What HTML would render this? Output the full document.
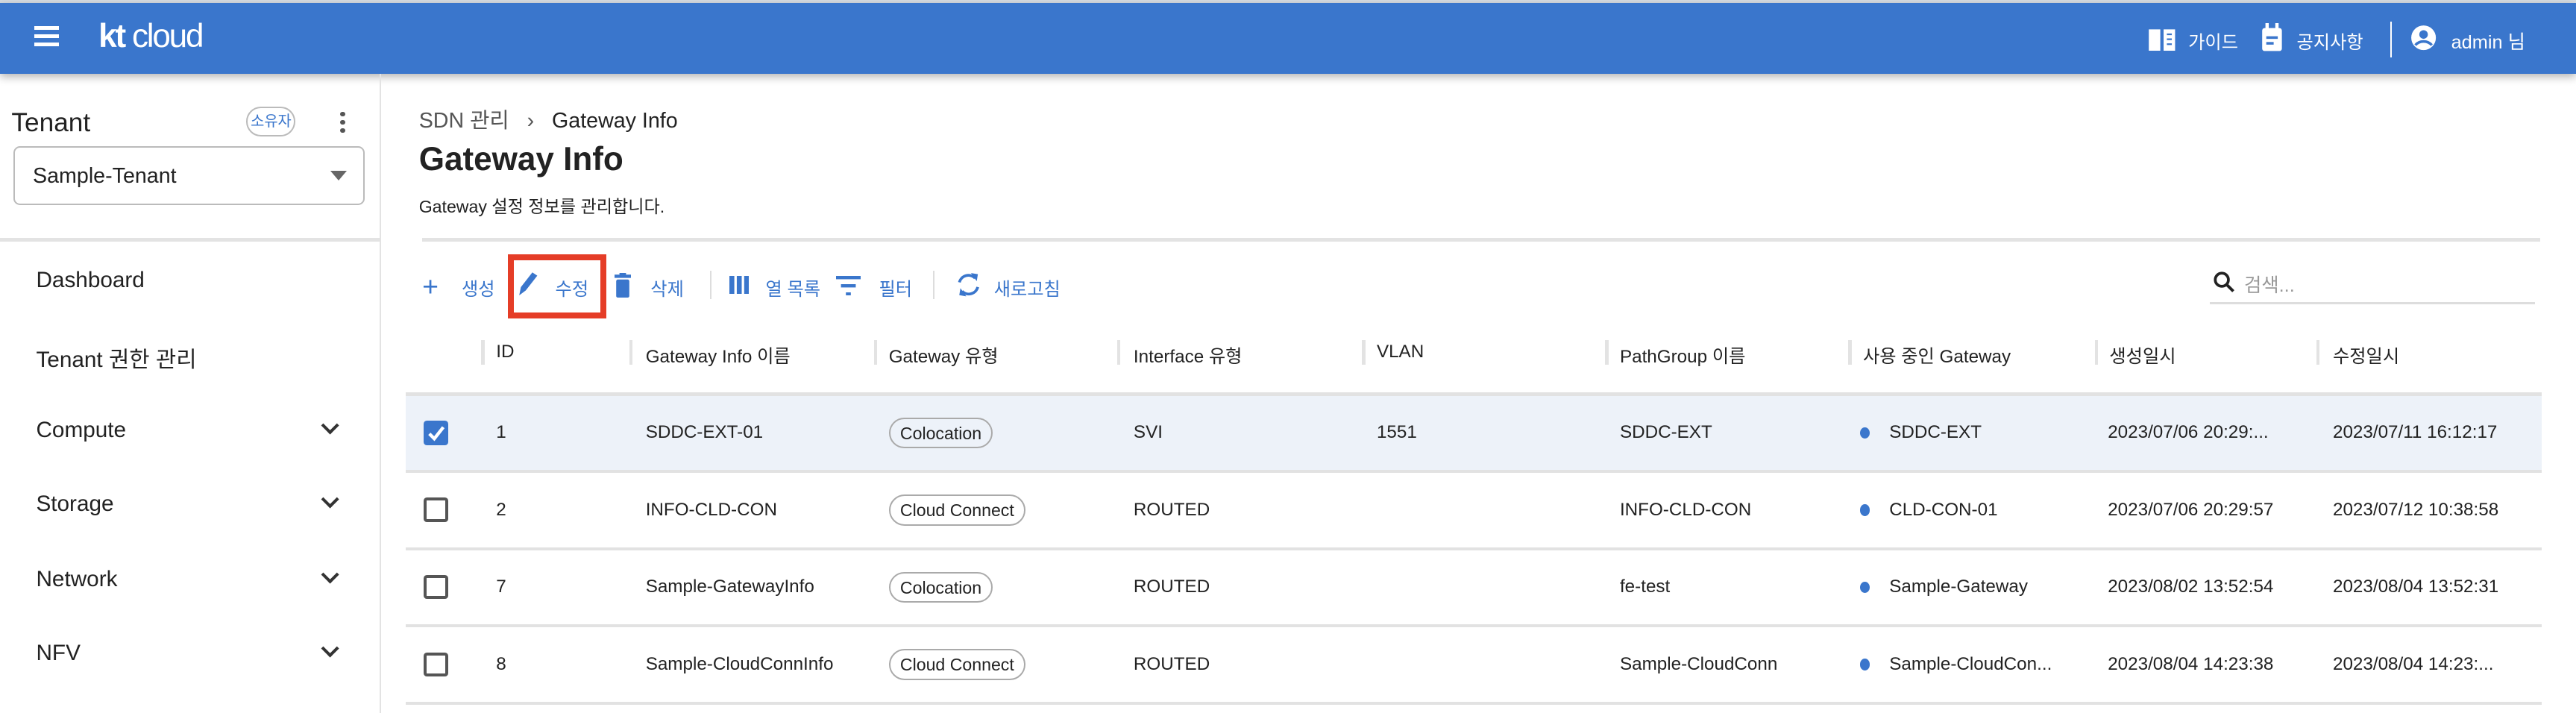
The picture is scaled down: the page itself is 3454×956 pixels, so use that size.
<!DOCTYPE html>
<html><head><meta charset="utf-8"><style>
html,body{margin:0;padding:0;background:#fff;overflow:hidden}
body{width:3454px;height:956px}
#w{zoom:2.2028;width:1568px;height:434px;position:relative;font-family:"Liberation Sans","Noto Sans CJK KR",sans-serif;color:#222}
.a{position:absolute;white-space:nowrap}
.hdr{position:absolute;left:0;top:2px;width:1568px;height:43px;background:#3a76cc;box-shadow:0 2px 5px rgba(0,0,0,.3)}
.top{position:absolute;left:0;top:0;width:1568px;height:2px;background:#d5dbe1}
.w{color:#fff}
.menu{font-size:13.5px;color:#222}
.chev{position:absolute;left:197px;width:6px;height:6px;border-right:2px solid #333;border-bottom:2px solid #333;transform:rotate(45deg)}
.tb{font-size:11px;color:#3a76cc}
.th{font-size:11px;color:#222;top:208px}
.sep{position:absolute;top:207px;width:2px;height:15px;background:#e3e3e3}
.hl{position:absolute;left:247px;width:1300px;height:2px;background:#e2e2e2}
.td{font-size:11px;color:#222}
.chip{position:absolute;left:541px;height:19px;border:1px solid #aaa;border-radius:10px;font-size:10.5px;line-height:18px;padding:0 6px;box-sizing:border-box}
.cb{position:absolute;left:258px;width:11px;height:11px;border:2px solid #555;border-radius:2px}
.dot{position:absolute;left:1132px;width:6px;height:7px;border-radius:50%;background:#3a76cc}
</style></head><body><div id="w">
<div class="top"></div>
<div class="hdr">
 <div class="a" style="left:21px;top:14px;width:15px;height:2px;background:#fff;box-shadow:0 5px 0 #fff,0 10px 0 #fff"></div>
 <div class="a w" style="left:60px;top:9px;font-size:20px;font-weight:bold;letter-spacing:-1px">kt <span style="font-weight:normal">cloud</span></div>
 <svg class="a" style="left:1307px;top:14px" width="18" height="16" viewBox="0 0 18 16"><path d="M1 2h7v13H1zM10 2h7v13h-7z" fill="#fff"/><path d="M12 5h3M12 8h3M12 11h3" stroke="#3a76cc" stroke-width="1"/></svg>
 <div class="a w" style="left:1332px;top:15px;font-size:11px">가이드</div>
 <svg class="a" style="left:1376px;top:12px" width="14" height="18" viewBox="0 0 14 18"><rect x="1" y="3" width="12" height="14" rx="1.5" fill="#fff"/><rect x="3" y="0" width="2" height="4" fill="#fff"/><rect x="9" y="0" width="2" height="4" fill="#fff"/><rect x="3.5" y="8" width="7" height="1.6" fill="#3a76cc"/><rect x="3.5" y="11.5" width="4.5" height="1.6" fill="#3a76cc"/></svg>
 <div class="a w" style="left:1398px;top:15px;font-size:11px">공지사항</div>
 <div class="a" style="left:1455px;top:11px;width:1px;height:22px;background:#fff"></div>
 <svg class="a" style="left:1467px;top:13px" width="16" height="16" viewBox="0 0 16 16"><circle cx="8" cy="8" r="7.5" fill="#fff"/><circle cx="8" cy="6" r="2.6" fill="#3a76cc"/><path d="M3 12.5c2.5-3 7.5-3 10 0" stroke="#3a76cc" stroke-width="1.6" fill="none"/></svg>
 <div class="a w" style="left:1492px;top:15px;font-size:11.5px">admin 님</div>
</div>
<div class="a" style="left:231px;top:45px;width:1px;height:389px;background:#e3e3e3"></div>
<div class="a" style="left:7px;top:66px;font-size:16px">Tenant</div>
<div class="a" style="left:150px;top:65px;width:30px;height:18px;border:1px solid #bbb;border-radius:9px;font-size:9px;color:#3a76cc;text-align:center;line-height:17px;box-sizing:border-box">소유자</div>
<div class="a" style="left:207px;top:68px;width:3px;height:3px;border-radius:50%;background:#555;box-shadow:0 5px 0 #555,0 10px 0 #555"></div>
<div class="a" style="left:8px;top:89px;width:214px;height:36px;border:1px solid #bbb;border-radius:4px;box-sizing:border-box"></div>
<div class="a" style="left:20px;top:100px;font-size:13px">Sample-Tenant</div>
<div class="a" style="left:201px;top:104px;width:0;height:0;border-left:5px solid transparent;border-right:5px solid transparent;border-top:6px solid #666"></div>
<div class="a" style="left:0;top:145px;width:231px;height:2px;background:#e3e3e3"></div>
<div class="a menu" style="left:22px;top:163px">Dashboard</div>
<div class="a menu" style="left:22px;top:208px">Tenant 권한 관리</div>
<div class="a menu" style="left:22px;top:254px">Compute</div><div class="chev" style="top:255px"></div>
<div class="a menu" style="left:22px;top:299px">Storage</div><div class="chev" style="top:300px"></div>
<div class="a menu" style="left:22px;top:345px">Network</div><div class="chev" style="top:346px"></div>
<div class="a menu" style="left:22px;top:390px">NFV</div><div class="chev" style="top:391px"></div>

<div class="a" style="left:255px;top:63px;font-size:13px;color:#555">SDN 관리 &nbsp;&nbsp;›&nbsp;&nbsp; <span style="color:#222">Gateway Info</span></div>
<div class="a" style="left:255px;top:86px;font-size:20px;font-weight:bold">Gateway Info</div>
<div class="a" style="left:255px;top:117px;font-size:10.5px">Gateway 설정 정보를 관리합니다.</div>
<div class="a" style="left:257px;top:145px;width:1289px;height:2px;background:#e3e3e3"></div>

<div class="a tb" style="left:257px;top:166px;font-size:17px;line-height:17px">+</div>
<div class="a tb" style="left:281px;top:167px">생성</div>
<svg class="a" style="left:315px;top:165px" width="14" height="16" viewBox="0 0 14 16"><path d="M1 15l1-5 7-9 3 2-7 9z" fill="#3a76cc"/></svg>
<div class="a tb" style="left:338px;top:167px">수정</div>
<div class="a" style="left:309px;top:155px;width:60px;height:39px;border:4px solid #e53d27;box-sizing:border-box"></div>
<svg class="a" style="left:374px;top:166px" width="10" height="15" viewBox="0 0 10 15"><rect x="0" y="1" width="10" height="2" fill="#3a76cc"/><rect x="3" y="0" width="4" height="2" fill="#3a76cc"/><rect x="1" y="4" width="8" height="11" rx="1" fill="#3a76cc"/></svg>
<div class="a tb" style="left:396px;top:167px">삭제</div>
<div class="a" style="left:432px;top:165px;width:1px;height:17px;background:#ddd"></div>
<svg class="a" style="left:444px;top:168px" width="12" height="11"><rect x="0" y="0" width="3" height="11" fill="#3a76cc"/><rect x="4.5" y="0" width="3" height="11" fill="#3a76cc"/><rect x="9" y="0" width="3" height="11" fill="#3a76cc"/></svg>
<div class="a tb" style="left:466px;top:167px">열 목록</div>
<svg class="a" style="left:509px;top:168px" width="15" height="12"><rect x="0" y="0" width="15" height="2" fill="#3a76cc"/><rect x="3" y="5" width="9" height="2" fill="#3a76cc"/><rect x="6" y="10" width="3" height="2" fill="#3a76cc"/></svg>
<div class="a tb" style="left:535px;top:167px">필터</div>
<div class="a" style="left:568px;top:165px;width:1px;height:17px;background:#ddd"></div>
<svg class="a" style="left:581px;top:165px" width="17" height="17" viewBox="0 0 24 24"><path d="M17.6 6.4A8 8 0 0 0 4.1 10M6.4 17.6A8 8 0 0 0 19.9 14" stroke="#3a76cc" stroke-width="2.4" fill="none"/><path d="M14 2l6 1-1 6zM10 22l-6-1 1-6z" fill="#3a76cc"/></svg>
<div class="a tb" style="left:605px;top:167px">새로고침</div>
<svg class="a" style="left:1347px;top:165px" width="14" height="14" viewBox="0 0 14 14"><circle cx="5.5" cy="5.5" r="4" stroke="#222" stroke-width="1.7" fill="none"/><path d="M8.5 8.5l4 4" stroke="#222" stroke-width="1.8"/></svg>
<div class="a" style="left:1366px;top:165px;font-size:11.5px;color:#999">검색...</div>
<div class="a" style="left:1345px;top:184px;width:198px;height:1px;background:#ddd"></div>

<div class="sep" style="left:293px"></div><div class="sep" style="left:383px"></div><div class="sep" style="left:532px"></div><div class="sep" style="left:680px"></div><div class="sep" style="left:829px"></div><div class="sep" style="left:977px"></div><div class="sep" style="left:1125px"></div><div class="sep" style="left:1275px"></div><div class="sep" style="left:1410px"></div>
<div class="a th" style="left:302px">ID</div>
<div class="a th" style="left:393px">Gateway Info 이름</div>
<div class="a th" style="left:541px">Gateway 유형</div>
<div class="a th" style="left:690px">Interface 유형</div>
<div class="a th" style="left:838px">VLAN</div>
<div class="a th" style="left:986px">PathGroup 이름</div>
<div class="a th" style="left:1134px">사용 중인 Gateway</div>
<div class="a th" style="left:1284px">생성일시</div>
<div class="a th" style="left:1420px">수정일시</div>

<div class="a" style="left:247px;top:240px;width:1300px;height:47px;background:#edf2f9"></div>
<div class="hl" style="top:239px"></div><div class="hl" style="top:286px"></div><div class="hl" style="top:333px"></div><div class="hl" style="top:380px"></div><div class="hl" style="top:427px"></div>

<div class="a" style="left:258px;top:256px;width:15px;height:15px;background:#3a76cc;border-radius:2px"></div>
<svg class="a" style="left:258px;top:256px" width="15" height="15"><path d="M3.5 8l3 3 5.5-7" stroke="#fff" stroke-width="2" fill="none"/></svg>
<div class="a td" style="left:302px;top:257px">1</div>
<div class="a td" style="left:393px;top:257px">SDDC-EXT-01</div>
<div class="chip" style="top:254px">Colocation</div>
<div class="a td" style="left:690px;top:257px">SVI</div>
<div class="a td" style="left:838px;top:257px">1551</div>
<div class="a td" style="left:986px;top:257px">SDDC-EXT</div>
<div class="dot" style="top:260px"></div><div class="a td" style="left:1150px;top:257px">SDDC-EXT</div>
<div class="a td" style="left:1283px;top:257px">2023/07/06 20:29:...</div>
<div class="a td" style="left:1420px;top:257px">2023/07/11 16:12:17</div>

<div class="cb" style="top:303px"></div>
<div class="a td" style="left:302px;top:304px">2</div>
<div class="a td" style="left:393px;top:304px">INFO-CLD-CON</div>
<div class="chip" style="top:301px">Cloud Connect</div>
<div class="a td" style="left:690px;top:304px">ROUTED</div>
<div class="a td" style="left:986px;top:304px">INFO-CLD-CON</div>
<div class="dot" style="top:307px"></div><div class="a td" style="left:1150px;top:304px">CLD-CON-01</div>
<div class="a td" style="left:1283px;top:304px">2023/07/06 20:29:57</div>
<div class="a td" style="left:1420px;top:304px">2023/07/12 10:38:58</div>

<div class="cb" style="top:350px"></div>
<div class="a td" style="left:302px;top:351px">7</div>
<div class="a td" style="left:393px;top:351px">Sample-GatewayInfo</div>
<div class="chip" style="top:348px">Colocation</div>
<div class="a td" style="left:690px;top:351px">ROUTED</div>
<div class="a td" style="left:986px;top:351px">fe-test</div>
<div class="dot" style="top:354px"></div><div class="a td" style="left:1150px;top:351px">Sample-Gateway</div>
<div class="a td" style="left:1283px;top:351px">2023/08/02 13:52:54</div>
<div class="a td" style="left:1420px;top:351px">2023/08/04 13:52:31</div>

<div class="cb" style="top:397px"></div>
<div class="a td" style="left:302px;top:398px">8</div>
<div class="a td" style="left:393px;top:398px">Sample-CloudConnInfo</div>
<div class="chip" style="top:395px">Cloud Connect</div>
<div class="a td" style="left:690px;top:398px">ROUTED</div>
<div class="a td" style="left:986px;top:398px">Sample-CloudConn</div>
<div class="dot" style="top:401px"></div><div class="a td" style="left:1150px;top:398px">Sample-CloudCon...</div>
<div class="a td" style="left:1283px;top:398px">2023/08/04 14:23:38</div>
<div class="a td" style="left:1420px;top:398px">2023/08/04 14:23:...</div>
</div></body></html>
